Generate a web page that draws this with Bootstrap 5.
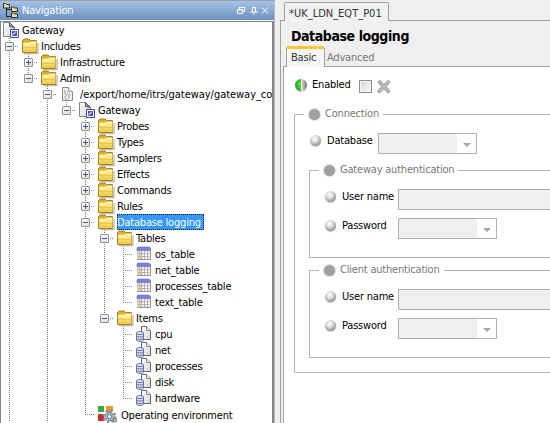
<!DOCTYPE html>
<html lang="en">
<head>
<meta charset="utf-8">
<title>Gateway setup editor</title>
<link href="https://cdn.jsdelivr.net/npm/bootstrap@5.3.0/dist/css/bootstrap.min.css" rel="stylesheet">
<style>
body{font-family:"DejaVu Sans Condensed","DejaVu Sans",sans-serif;font-stretch:condensed;font-size:11px;line-height:16px;letter-spacing:-.2px;background:#efefef;color:#000;white-space:nowrap}
.nav-panel{width:275px;border-top:1px solid #a0a0a4;border-right:1px solid #bcbcbc}
.nav-head{height:19px;background:linear-gradient(#a4c3e8,#6c91bd);color:#fff;padding:0 5px 0 2px}
.nav-head span{margin-left:3px}
.tree{margin-top:1px;border:1px solid #85858f;border-right:2px solid #85858f;border-bottom:0;background:#fff;outline:1px solid #fff}
.tree-rows{margin-left:-1px}
.tree-row{height:16px}
.tree-row>svg{width:19px;height:17px;margin-left:3px;overflow:visible}
.tree-row>svg+span{line-height:17px}
.tree-row>svg+.path{letter-spacing:-.04px;padding-left:1px}
.g{width:19px;height:16px;flex:none;background-repeat:no-repeat;--v:repeating-linear-gradient(#808080 0 1px,transparent 1px 2px);--h:repeating-linear-gradient(90deg,#808080 0 1px,transparent 1px 2px)}
.gv{background-image:var(--v);background-position:9px 0;background-size:1px 16px}
.gt{background-image:var(--v),var(--h);background-position:9px 0,9px 8px;background-size:1px 16px,11px 1px}
.ge{background-image:var(--v),var(--h);background-position:9px 0,9px 8px;background-size:1px 8px,11px 1px}
.xp{display:block;width:9px;height:9px;margin:4px 0 0 5px;border:1px solid #919191;border-radius:1px;background:linear-gradient(#3c59a5,#3c59a5) center/5px 1px no-repeat,linear-gradient(135deg,#fff,#dcdcdc)}
.xp.plus{background:linear-gradient(#3c59a5,#3c59a5) center/5px 1px no-repeat,linear-gradient(#3c59a5,#3c59a5) center/1px 5px no-repeat,linear-gradient(135deg,#fff,#dcdcdc)}
.picked{background:#3399ff;color:#fff;outline:1px dotted #222;outline-offset:-1px;height:16px;padding-right:3px}
.editor{margin-left:5px}
.file-tab{position:relative;z-index:1;width:105px;height:19px;margin:2px 0 0 4px;border:1px solid #a0a0a0;border-bottom:0;border-radius:2px 2px 0 0;padding-left:4px;line-height:21px;letter-spacing:0;color:#333;background:#f2f2f2}
.file-page{border-top:1px solid #a0a0a0;border-left:1px solid #a0a0a0;padding-left:2px;margin-top:-1px}
.page-title{font-size:14px;font-weight:bold;line-height:18px;padding:6px 0 0 8px;height:25px;margin:0;letter-spacing:-.42px}
.sub-tabs{height:21px;padding-left:3px;border-bottom:1px solid #a0a0a0}
.sub-on{width:39px;height:21px;border:1px solid #a0a0a0;border-top:3px solid #ffc633;border-bottom:0;border-radius:3px 3px 0 0;padding-left:4px;line-height:18px;color:#333;background:#f6f6f6}
.sub-off{padding:3px 0 0 2px;color:#777;line-height:18px}
.sheet{background:#fff;border-left:1px solid #a0a0a0;height:356px;padding-left:10px}
.enabled-row{height:35px;padding-left:1px}
.enabled-row .orb{width:12px;height:12px;margin-right:5px}
.box{width:13px;height:13px;border:1px solid #8e8f8f;background:linear-gradient(135deg,#cfcfcf,#fff);box-shadow:inset 0 0 0 1px #f4f4f4}
.orb{width:11px;height:11px;border-radius:50%;flex:none;background:radial-gradient(circle at 42% 35%,#fff 0,#dedada 35%,#a69c9c 65%,#776c6c 95%);box-shadow:0 1px 1px #ccc}
.orb.live{background:linear-gradient(90deg,transparent 50%,#ededed 50%,#777 95%),radial-gradient(circle at 60% 45%,#7ff06a,#2fb32a 60%,#156b14)}
.orb.off{background:#a0a0a0;box-shadow:0 0 1px 1px #ddd}
.grp{border:1px solid #b5b5b5;border-right:0}
.grp-head{height:16px;margin-top:-9px;margin-left:9px;width:max-content;background:#fff;color:#777;padding:0 4px 0 5px;gap:5px}
.outer{height:259px}
.inner{height:88px;margin-left:14px}
.inner+.inner{margin-top:12px}
.line{padding-left:15px}
.grp-head+.line{padding-top:11px}
.line .orb{margin-top:2px}
.fld{background:#efefef;border:1px solid #b0b0b5;height:21px}
.fld.flex-grow-1{border-right:0}
.pick{width:99px}
.pick i{width:19px;height:19px;background:#fff}
.pick i::after{content:"";border:4px solid transparent;border-top-color:#a5a5a8;border-bottom:0;margin-top:3px}
.lbl{width:57px;padding-left:6px;flex:none}
.inner .lbl{width:62px}
</style>
<script src="https://cdn.jsdelivr.net/npm/bootstrap@5.3.0/dist/js/bootstrap.bundle.min.js"></script>
</head>
<body class="vh-100 overflow-hidden">
<svg class="position-absolute" width="0" height="0">
<linearGradient id="gold" x2="0" y2="1"><stop stop-color="#fff3a0"/><stop offset=".5" stop-color="#f6df70"/><stop offset="1" stop-color="#eac94c"/></linearGradient>
<linearGradient id="sheetg" x2="1" y2="1"><stop stop-color="#fff"/><stop offset="1" stop-color="#d5d5d5"/></linearGradient>
<symbol id="folder" viewBox="0 0 19 17"><path d="M2 15.500h14V5" fill="none" stroke="#bbb" stroke-width="1.400"/><path d="M.5 14.500V2.500L2 1h5l1.500 1.500h6V14.500z" fill="#d9ae2c" stroke="#ab821d"/><path d="M1 5.500l1-1h5.500L9 3.500h5.500v10.500H1z" fill="url(#gold)"/><path d="M1 6.500h7L9.500 5H14" fill="none" stroke="#fffbd0"/><path d="M1 9.500h13" stroke="#e0bc45" stroke-width=".7"/></symbol>
<symbol id="gate" viewBox="0 0 19 17"><path d="M.5 .5h6l5 5v9H.5z" fill="url(#sheetg)" stroke="#888"/><path d="M6.500 .5l5 5-5-1z" fill="#999" stroke="#555"/><path d="M7.500 7.500h8v8h-8z" fill="#fff" stroke="#4045b0"/><path d="M9 9h5v5H9z" fill="#4a50b8"/><path d="M10 13.500v-2h2v-1.500h1" fill="none" stroke="#cdd0ff"/></symbol>
<symbol id="file" viewBox="0 0 19 17"><path d="M2.500 1.500h6l4 4v9h-10z" fill="#eee" stroke="#8a8a8a"/><path d="M8.500 1.500v4h4" fill="#fff" stroke="#999"/><path d="M4 5h3M4 7h4M5 9h6M4 11h3m1 0h3M5 13h4" stroke="#999" stroke-dasharray="2 1"/></symbol>
<symbol id="table" viewBox="0 0 19 17"><path d="M1.500 3.500h13v10h-13z" fill="#f4f4f4" stroke="#929292"/><path d="M1 4h4v9H1z" fill="#e2cfb6"/><path d="M1.500 7.500h12M1.500 10.500h12M5.500 4v9M8.500 4v9M11.500 4v9" stroke="#b5b0b0"/><path d="M1 4.500V2l1-1h11l1.500 1v2.500z" fill="#7f7fe0" stroke="#6565c5" stroke-width=".6"/></symbol>
<symbol id="item" viewBox="0 0 19 17"><path d="M5.500 .5h5l4 4v9h-9z" fill="url(#sheetg)" stroke="#666"/><path d="M10.500 .5v4h4" fill="#eee" stroke="#888"/><path d="M.5 7v7c0 2 7 2 7 0V7z" fill="#d3d9f0" stroke="#6b769f"/><ellipse cx="4" cy="7" rx="3.500" ry="1.500" fill="#eef1ff" stroke="#6b769f"/><path d="M.5 9.500c0 2 7 2 7 0M.5 12c0 2 7 2 7 0" fill="none" stroke="#6b769f"/></symbol>
</svg>
<div class="d-flex h-100">
<aside class="nav-panel d-flex flex-column flex-shrink-0 h-100 overflow-hidden">
<header class="nav-head d-flex align-items-center">
<svg width="17" height="17" viewBox="0 0 17 17"><path d="M4.500 6v8.500H9M4.500 7.500H9" fill="none" stroke="#222"/><g fill="#e8df9c" stroke="#333"><path d="M1.500 6V1.500h2l1 1h3V6z"/><path d="M9.500 9.500V5h2l1 1h3v3.500z"/><path d="M9.500 15.500V11h2l1 1h3v3.500z"/></g></svg>
<span>Navigation</span>
<svg class="ms-auto" width="32" height="10" viewBox="0 0 32 10" fill="none" stroke="#fff"><path d="M.5 3.500h5v4h-5zM.5 4h5M2.500 3V1.500h5v4H6M2 1.500h6"/><path d="M15.500 5.500v-4h3v4M13 6h8M17 6v3M18.500 2v4"/><path d="M25 1.500l6 6M31 1.500l-6 6"/></svg>
</header>
<section class="tree flex-grow-1 overflow-hidden">
<div class="tree-rows">
<div class="tree-row d-flex"><svg><use href="#gate"/></svg><span>Gateway</span></div>
<div class="tree-row d-flex"><span class="g gt"><b class="xp"></b></span><svg><use href="#folder"/></svg><span>Includes</span></div>
<div class="tree-row d-flex"><span class="g gv"></span><span class="g gt"><b class="xp plus"></b></span><svg><use href="#folder"/></svg><span>Infrastructure</span></div>
<div class="tree-row d-flex"><span class="g gv"></span><span class="g ge"><b class="xp"></b></span><svg><use href="#folder"/></svg><span>Admin</span></div>
<div class="tree-row d-flex"><span class="g gv"></span><span class="g"></span><span class="g gt"><b class="xp"></b></span><svg><use href="#file"/></svg><span class="path">/export/home/itrs/gateway/gateway_co</span></div>
<div class="tree-row d-flex"><span class="g gv"></span><span class="g"></span><span class="g gv"></span><span class="g ge"><b class="xp"></b></span><svg><use href="#gate"/></svg><span>Gateway</span></div>
<div class="tree-row d-flex"><span class="g gv"></span><span class="g"></span><span class="g gv"></span><span class="g"></span><span class="g gt"><b class="xp plus"></b></span><svg><use href="#folder"/></svg><span>Probes</span></div>
<div class="tree-row d-flex"><span class="g gv"></span><span class="g"></span><span class="g gv"></span><span class="g"></span><span class="g gt"><b class="xp plus"></b></span><svg><use href="#folder"/></svg><span>Types</span></div>
<div class="tree-row d-flex"><span class="g gv"></span><span class="g"></span><span class="g gv"></span><span class="g"></span><span class="g gt"><b class="xp plus"></b></span><svg><use href="#folder"/></svg><span>Samplers</span></div>
<div class="tree-row d-flex"><span class="g gv"></span><span class="g"></span><span class="g gv"></span><span class="g"></span><span class="g gt"><b class="xp plus"></b></span><svg><use href="#folder"/></svg><span>Effects</span></div>
<div class="tree-row d-flex"><span class="g gv"></span><span class="g"></span><span class="g gv"></span><span class="g"></span><span class="g gt"><b class="xp plus"></b></span><svg><use href="#folder"/></svg><span>Commands</span></div>
<div class="tree-row d-flex"><span class="g gv"></span><span class="g"></span><span class="g gv"></span><span class="g"></span><span class="g gt"><b class="xp plus"></b></span><svg><use href="#folder"/></svg><span>Rules</span></div>
<div class="tree-row d-flex"><span class="g gv"></span><span class="g"></span><span class="g gv"></span><span class="g"></span><span class="g gt"><b class="xp"></b></span><svg><use href="#folder"/></svg><span class="picked">Database logging</span></div>
<div class="tree-row d-flex"><span class="g gv"></span><span class="g"></span><span class="g gv"></span><span class="g"></span><span class="g gv"></span><span class="g gt"><b class="xp"></b></span><svg><use href="#folder"/></svg><span>Tables</span></div>
<div class="tree-row d-flex"><span class="g gv"></span><span class="g"></span><span class="g gv"></span><span class="g"></span><span class="g gv"></span><span class="g gv"></span><span class="g gt"></span><svg><use href="#table"/></svg><span>os_table</span></div>
<div class="tree-row d-flex"><span class="g gv"></span><span class="g"></span><span class="g gv"></span><span class="g"></span><span class="g gv"></span><span class="g gv"></span><span class="g gt"></span><svg><use href="#table"/></svg><span>net_table</span></div>
<div class="tree-row d-flex"><span class="g gv"></span><span class="g"></span><span class="g gv"></span><span class="g"></span><span class="g gv"></span><span class="g gv"></span><span class="g gt"></span><svg><use href="#table"/></svg><span>processes_table</span></div>
<div class="tree-row d-flex"><span class="g gv"></span><span class="g"></span><span class="g gv"></span><span class="g"></span><span class="g gv"></span><span class="g gv"></span><span class="g ge"></span><svg><use href="#table"/></svg><span>text_table</span></div>
<div class="tree-row d-flex"><span class="g gv"></span><span class="g"></span><span class="g gv"></span><span class="g"></span><span class="g gv"></span><span class="g ge"><b class="xp"></b></span><svg><use href="#folder"/></svg><span>Items</span></div>
<div class="tree-row d-flex"><span class="g gv"></span><span class="g"></span><span class="g gv"></span><span class="g"></span><span class="g gv"></span><span class="g"></span><span class="g gt"></span><svg><use href="#item"/></svg><span>cpu</span></div>
<div class="tree-row d-flex"><span class="g gv"></span><span class="g"></span><span class="g gv"></span><span class="g"></span><span class="g gv"></span><span class="g"></span><span class="g gt"></span><svg><use href="#item"/></svg><span>net</span></div>
<div class="tree-row d-flex"><span class="g gv"></span><span class="g"></span><span class="g gv"></span><span class="g"></span><span class="g gv"></span><span class="g"></span><span class="g gt"></span><svg><use href="#item"/></svg><span>processes</span></div>
<div class="tree-row d-flex"><span class="g gv"></span><span class="g"></span><span class="g gv"></span><span class="g"></span><span class="g gv"></span><span class="g"></span><span class="g gt"></span><svg><use href="#item"/></svg><span>disk</span></div>
<div class="tree-row d-flex"><span class="g gv"></span><span class="g"></span><span class="g gv"></span><span class="g"></span><span class="g gv"></span><span class="g"></span><span class="g ge"></span><svg><use href="#item"/></svg><span>hardware</span></div>
<div class="tree-row d-flex"><span class="g gv"></span><span class="g"></span><span class="g gv"></span><span class="g"></span><span class="g ge"></span><svg viewBox="0 0 19 17"><path d="M0 0h6v6H0z" fill="#39a845"/><path d="M8 0h7v6H8z" fill="#f0952a"/><path d="M0 8h6v7H0z" fill="#d22a2c"/><circle cx="11.500" cy="10.500" r="4.500" fill="#a9b7c8" stroke="#66768a"/><circle cx="11.500" cy="10.500" r="6" fill="none" stroke="#8292a6" stroke-width="2" stroke-dasharray="2.300 2.400"/><circle cx="11.500" cy="10.500" r="2" fill="#fff" stroke="#66768a"/><circle cx="17" cy="14" r="1.800" fill="#b9b9b9" stroke="#777"/></svg><span class="ps-1 pt-1 lh-1">Operating environment</span></div>
</div>
</section>
</aside>
<main class="editor flex-grow-1 overflow-hidden">
<div class="file-tab">*UK_LDN_EQT_P01</div>
<div class="file-page">
<h1 class="page-title">Database logging</h1>
<div class="sub-tabs d-flex"><div class="sub-on">Basic</div><div class="sub-off">Advanced</div></div>
<div class="sheet">
<div class="enabled-row d-flex align-items-center"><span class="orb live"></span><span class="me-2">Enabled</span><span class="box mt-1"></span><svg class="ms-1 mt-1" width="16" height="15" viewBox="0 0 15 14"><path d="M3.500 3L11.500 11.500M11.500 3L3 11.500" stroke="#8d8d8d" stroke-width="3.400" stroke-linecap="round"/><path d="M3.500 3L11.500 11.500M11.500 3L3 11.500" stroke="#bdbdbd" stroke-width="2" stroke-linecap="round"/></svg></div>
<div class="pt-2"><section class="grp outer mt-1">
<div class="grp-head d-flex align-items-center"><span class="orb off"></span>Connection</div>
<div class="line d-flex"><span class="orb"></span><span class="lbl">Database</span><span class="fld pick d-flex justify-content-end"><i class="d-flex align-items-center justify-content-center"></i></span></div>
<section class="grp inner mt-3">
<div class="grp-head d-flex align-items-center"><span class="orb off"></span>Gateway authentication</div>
<div class="line d-flex"><span class="orb"></span><span class="lbl">User name</span><span class="fld flex-grow-1"></span></div>
<div class="line d-flex mt-2"><span class="orb"></span><span class="lbl">Password</span><span class="fld pick d-flex justify-content-end"><i class="d-flex align-items-center justify-content-center"></i></span></div>
</section>
<section class="grp inner">
<div class="grp-head d-flex align-items-center"><span class="orb off"></span>Client authentication</div>
<div class="line d-flex"><span class="orb"></span><span class="lbl">User name</span><span class="fld flex-grow-1"></span></div>
<div class="line d-flex mt-2"><span class="orb"></span><span class="lbl">Password</span><span class="fld pick d-flex justify-content-end"><i class="d-flex align-items-center justify-content-center"></i></span></div>
</section>
</section></div>
</div>
</div>
</main>
</div>
</body>
</html>
